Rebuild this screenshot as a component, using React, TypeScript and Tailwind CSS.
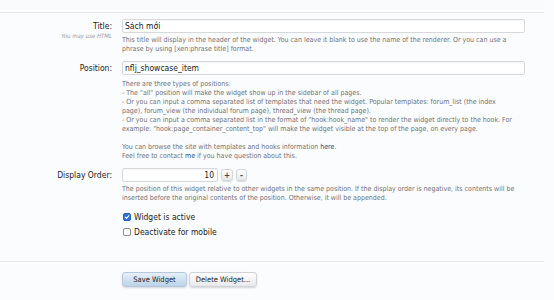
import React from "react";

/* ---------------- HELPERS ---------------- */

function Row({
  label,
  hint,
  children,
  className = "",
}: {
  label?: string;
  hint?: string;
  children: React.ReactNode;
  className?: string;
}) {
  return (
    <div className={`grid grid-cols-[112px_403px] gap-x-[10px] ${className}`}>
      <div className="flex flex-col items-end">
        {label && (
          <span className="text-[8.5px] leading-[14px] text-[#222]">{label}</span>
        )}
        {hint && (
          <span className="text-[6px] italic leading-[8px] text-[#9a9a9a] -mt-[1px]">
            {hint}
          </span>
        )}
      </div>
      <div className="flex flex-col">{children}</div>
    </div>
  );
}

function Help({ lines, className = "" }: { lines: React.ReactNode[]; className?: string }) {
  return (
    <div className={`text-[7px] leading-[9px] text-[#727272] ${className}`}>
      {lines.map((l, i) => (
        <div key={i} className="whitespace-nowrap h-[9px]">
          {l}
        </div>
      ))}
    </div>
  );
}

function Checkbox({ checked, label }: { checked?: boolean; label: string }) {
  return (
    <label className="flex items-center gap-[3px] h-[12px]">
      <span
        className={`w-[8px] h-[8px] rounded-[2px] flex items-center justify-center ml-[1px] ${
          checked
            ? "bg-[#2f6fd0] border border-[#2a62b8]"
            : "bg-white border border-[#8a8a8a]"
        }`}
      >
        {checked && (
          <svg width="6" height="6" viewBox="0 0 10 10">
            <path
              d="M2 5.2 L4.2 7.4 L8.2 2.6"
              fill="none"
              stroke="white"
              strokeWidth="1.8"
              strokeLinecap="round"
              strokeLinejoin="round"
            />
          </svg>
        )}
      </span>
      <span className="text-[8.5px] text-[#222]">{label}</span>
    </label>
  );
}

const inputClass =
  "h-[14px] border border-[#d6d8dc] bg-white rounded-[2px] px-[2px] text-[8.5px] leading-[12px] text-[#222] shadow-[inset_0_1px_1px_rgba(0,0,0,0.04)]";

/* ---------------- COMPONENT ---------------- */

export default function App() {
  const link = "text-[#2b4a73]";

  return (
    <div
      className="w-[554px] h-[300px] bg-[#fbfcfe] overflow-hidden"
      style={{ fontFamily: '"DejaVu Sans Condensed", "Liberation Sans", sans-serif' }}
    >
      <div className="w-[544px] h-[13px] border-b border-[#e4e7ec] bg-[#fafbfd]" />

      <Row label="Title:" hint="You may use HTML" className="pt-[6px]">
        <div className={inputClass}>Sách mới</div>
        <Help
          className="mt-[3px]"
          lines={[
            "This title will display in the header of the widget. You can leave it blank to use the name of the renderer. Or you can use a",
            "phrase by using [xen:phrase title] format.",
          ]}
        />
      </Row>

      <Row label="Position:" className="pt-[7px]">
        <div className={inputClass}>nflj_showcase_item</div>
        <Help
          className="mt-[5px]"
          lines={[
            "There are three types of positions:",
            '- The "all" position will make the widget show up in the sidebar of all pages.',
            "- Or you can input a comma separated list of templates that need the widget. Popular templates: forum_list (the index",
            "page), forum_view (the individual forum page), thread_view (the thread page).",
            '- Or you can input a comma separated list in the format of "hook:hook_name" to render the widget directly to the hook. For',
            'example: "hook:page_container_content_top" will make the widget visible at the top of the page, on every page.',
            "",
            <>
              You can browse the site with templates and hooks information{" "}
              <span className={link}>here</span>.
            </>,
            <>
              Feel free to contact <span className={link}>me</span> if you have question about this.
            </>,
          ]}
        />
      </Row>

      <Row label="Display Order:" className="pt-[7px]">
        <div className="flex items-center gap-[3px]">
          <div className={`${inputClass} w-[96px] text-right pr-[3px]`}>10</div>
          <button className="w-[12px] h-[12px] rounded-[3px] border border-[#d4d6da] bg-gradient-to-b from-white to-[#e6e8ec] text-[8px] leading-[9px] font-bold text-[#444] shadow-[0_1px_1px_rgba(0,0,0,0.12)]">
            +
          </button>
          <button className="w-[11px] h-[12px] rounded-[3px] border border-[#d4d6da] bg-gradient-to-b from-white to-[#e6e8ec] text-[8px] leading-[9px] font-bold text-[#444] shadow-[0_1px_1px_rgba(0,0,0,0.12)]">
            -
          </button>
        </div>
        <Help
          className="mt-[3px]"
          lines={[
            "The position of this widget relative to other widgets in the same position. If the display order is negative, its contents will be",
            "inserted before the original contents of the position. Otherwise, it will be appended.",
          ]}
        />
      </Row>

      <Row className="pt-[8px]">
        <div className="flex flex-col gap-[3px]">
          <Checkbox checked label="Widget is active" />
          <Checkbox label="Deactivate for mobile" />
        </div>
      </Row>

      <div className="w-[544px] mt-[23px] border-t border-[#e4e7ec]" />

      <Row className="pt-[10px]">
        <div className="flex gap-[2px]">
          <button className="w-[65px] h-[15px] rounded-[3px] border border-[#b3c8dc] bg-gradient-to-b from-[#e6f0f9] to-[#bcd3e8] text-[7.5px] text-[#222] shadow-[0_1px_2px_rgba(0,0,0,0.15)]">
            Save Widget
          </button>
          <button className="w-[68px] h-[15px] rounded-[3px] border border-[#cfd2d6] bg-gradient-to-b from-white to-[#e7e9ec] text-[7.5px] text-[#222] shadow-[0_1px_2px_rgba(0,0,0,0.15)]">
            Delete Widget...
          </button>
        </div>
      </Row>
    </div>
  );
}
